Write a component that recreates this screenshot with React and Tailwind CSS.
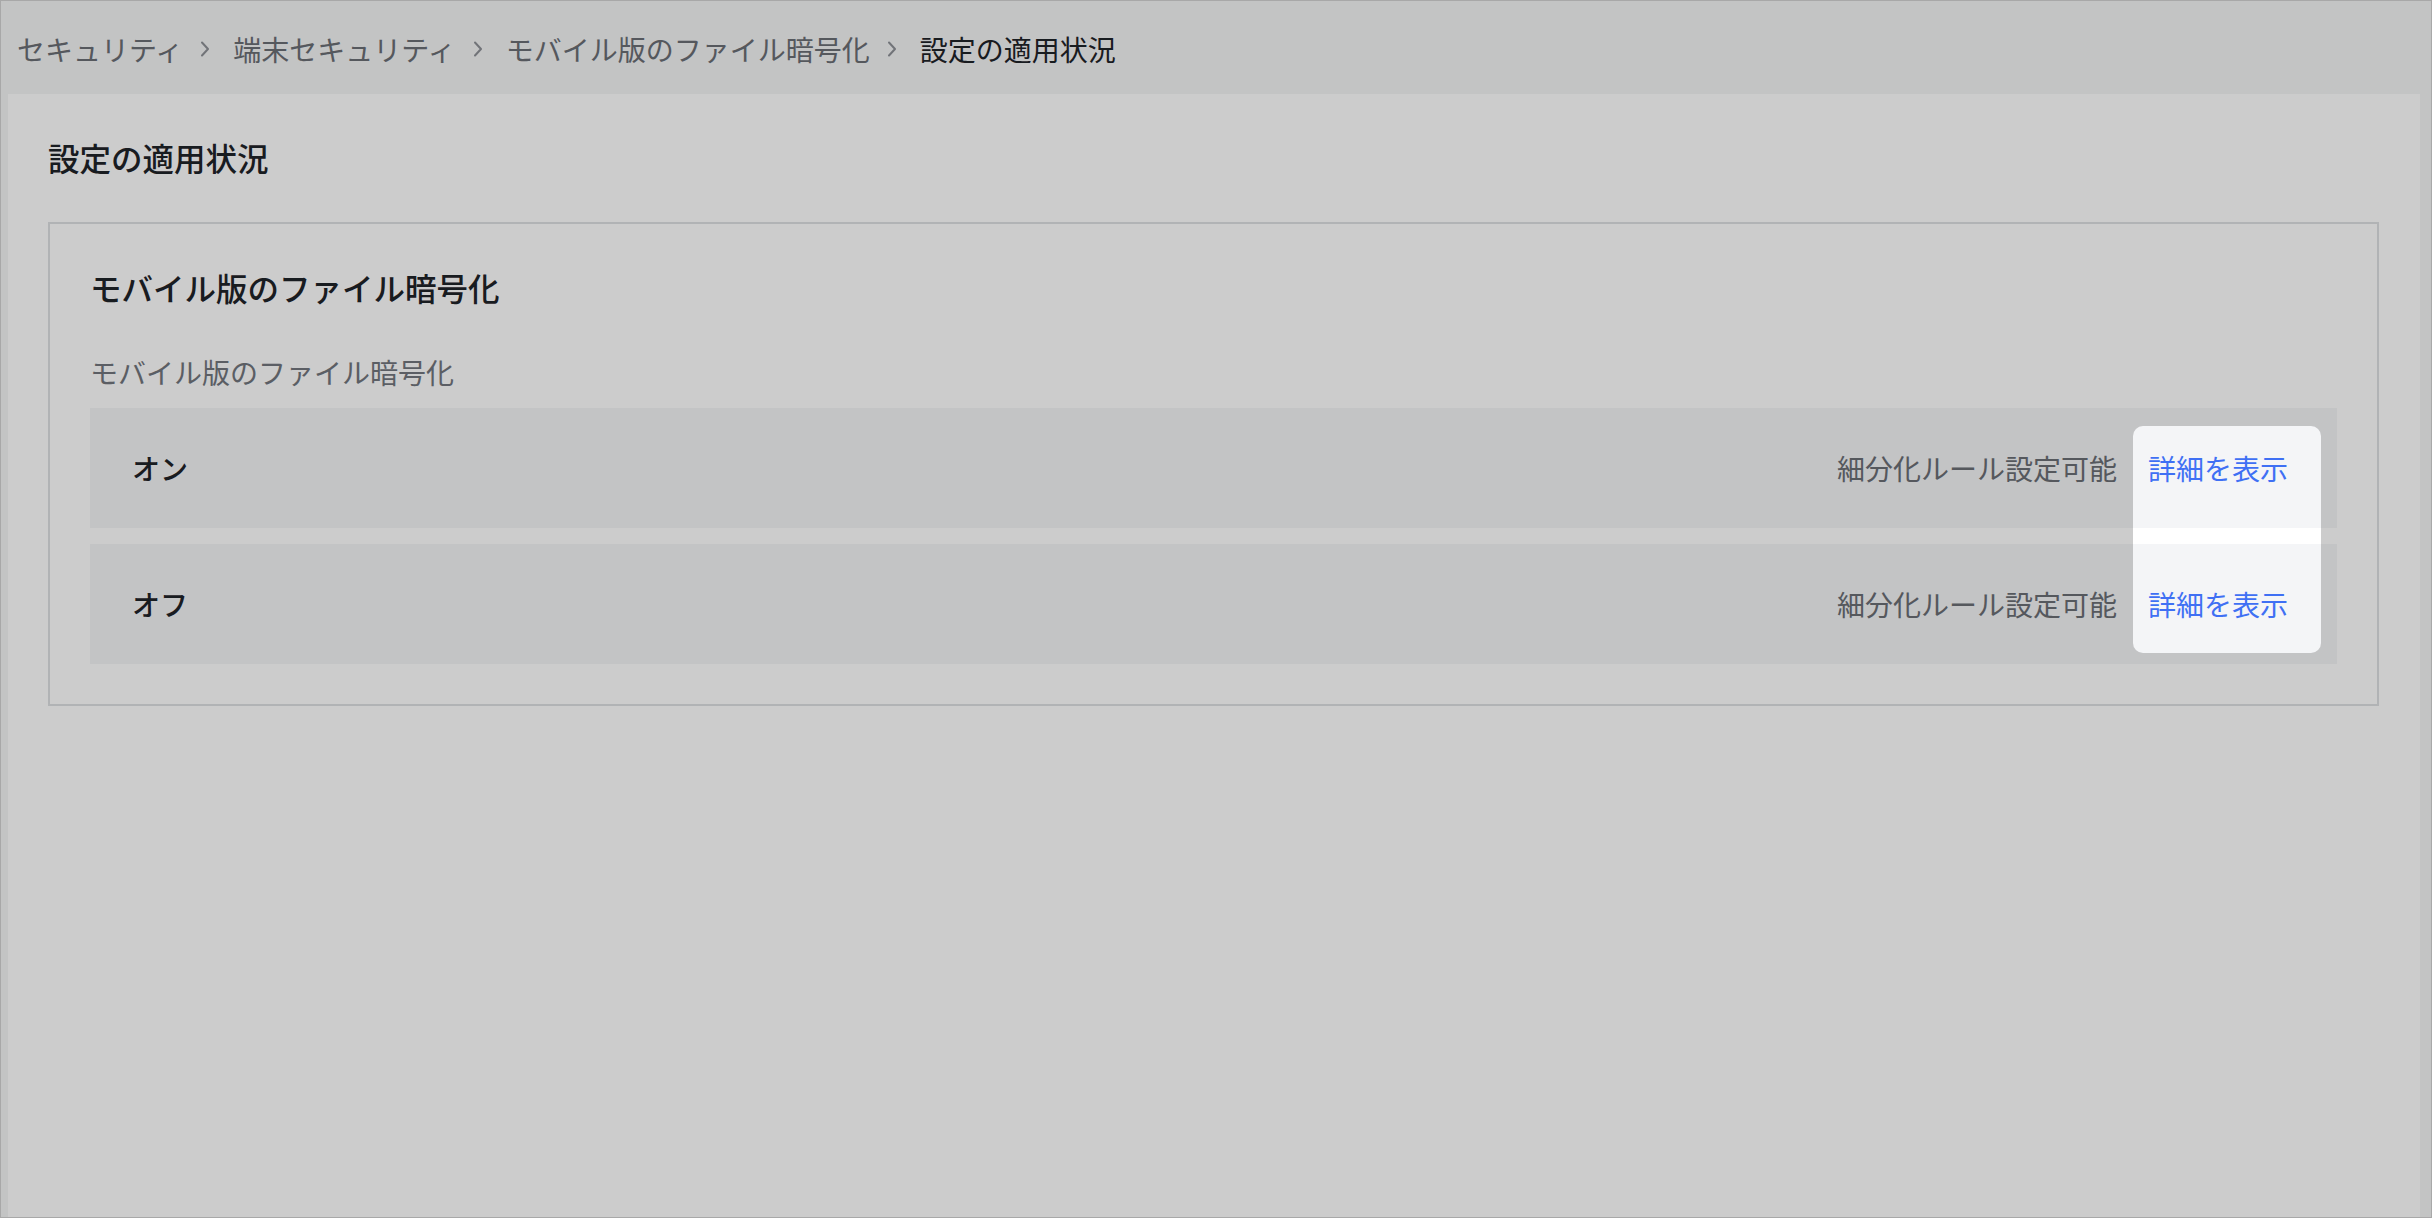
import React from "react";

const crumbs = ["セキュリティ", "端末セキュリティ", "モバイル版のファイル暗号化", "設定の適用状況"];

const rows = [
  { label: "オン", note: "細分化ルール設定可能" },
  { label: "オフ", note: "細分化ルール設定可能" },
];

function Chevron() {
  return (
    <svg width="14" height="20" viewBox="0 0 14 20" fill="none" className="ml-[15px] mr-[21px] shrink-0">
      <path d="M4 3.5 L10 10 L4 16.5" stroke="#8e9197" strokeWidth="2" strokeLinecap="round" strokeLinejoin="round" />
    </svg>
  );
}

export default function App() {
  return (
    <div className="w-[2432px] h-[1218px] bg-[#f4f5f6] border border-[#d2d2d2] flex flex-col font-['Noto_Sans_CJK_JP',sans-serif]">
      {/* breadcrumb */}
      <div className="h-[93px] shrink-0 flex items-center pl-[16px] pt-[2px] text-[28px] leading-[40px]">
        {crumbs.map((c, i) => (
          <React.Fragment key={c}>
            {i > 0 && <Chevron />}
            <span className={i === crumbs.length - 1 ? "text-[#1f2329]" : "text-[#6b6e75]"}>{c}</span>
          </React.Fragment>
        ))}
      </div>

      <div className="flex-1 bg-white ml-[7px] mr-[11px] pt-[42px] pl-[40px] pr-[41px]">
        <h1 className="text-[31.5px] leading-[43px] font-medium text-[#1f2329]">設定の適用状況</h1>

        <div className="mt-[43px] border-2 border-[#dee0e3] px-[40px] pt-[42px] pb-[40px]">
          <h2 className="text-[31.5px] leading-[43px] font-medium text-[#1f2329]">モバイル版のファイル暗号化</h2>
          <div className="mt-[43px] text-[28px] leading-[40px] text-[#72767d]">モバイル版のファイル暗号化</div>

          <div className="relative mt-[16px] flex flex-col gap-[16px]">
            {rows.map((r) => (
              <div key={r.label} className="h-[120px] bg-[#f4f5f7] flex items-center pl-[42px] pr-[49px] text-[28px] leading-[40px]">
                <span className="font-medium text-[#1f2329]">{r.label}</span>
                <span className="ml-auto text-[#6b6e75]">{r.note}</span>
                <button type="button" className="ml-[31px] text-[#3f70f4]">
                  詳細を表示
                </button>
              </div>
            ))}
            {/* tour spotlight */}
            <div className="absolute top-[18px] right-[16px] w-[188px] h-[227px] rounded-[10px] shadow-[0_0_0_9999px_rgba(0,0,0,0.2)] pointer-events-none z-20" />
          </div>
        </div>
      </div>
    </div>
  );
}
